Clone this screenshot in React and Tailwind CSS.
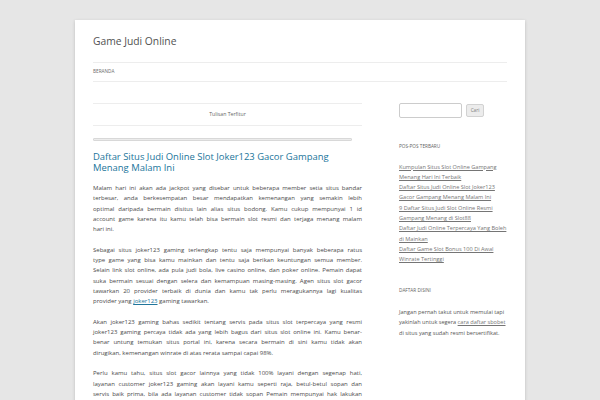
const paragraphs = [
  [
    'Malam hari ini akan ada jackpot yang disebar untuk beberapa member setia situs bandar',
    'terbesar, anda berkesempatan besar mendapatkan kemenangan yang semakin lebih',
    'optimal daripada bermain disitus lain alias situs bodong. Kamu cukup mempunyai 1 id',
    'account game karena itu kamu telah bisa bermain slot resmi dan terjaga menang malam',
    'hari ini.',
  ],
  [
    'Sebagai situs joker123 gaming terlengkap tentu saja mempunyai banyak beberapa ratus',
    'type game yang bisa kamu mainkan dan tentu saja berikan keuntungan semua member.',
    'Selain link slot online, ada pula judi bola, live casino online, dan poker online. Pemain dapat',
    'suka bermain sesuai dengan selera dan kemampuan masing-masing. Agen situs slot gacor',
    'tawarkan 20 provider terbaik di dunia dan kamu tak perlu meragukannya lagi kualitas',
    'LINK',
  ],
  [
    'Akan joker123 gaming bahas sedikit tentang servis pada situs slot terpercaya yang resmi',
    'joker123 gaming percaya tidak ada yang lebih bagus dari situs slot online ini. Kamu benar-',
    'benar untung temukan situs portal ini, karena secara bermain di sini kamu tidak akan',
    'dirugikan, kemenangan winrate di atas rerata sampai capai 98%.',
  ],
  [
    'Perlu kamu tahu, situs slot gacor lainnya yang tidak 100% layani dengan segenap hati,',
    'layanan customer joker123 gaming akan layani kamu seperti raja, betul-betul sopan dan',
    'servis baik prima, bila ada layanan customer tidak sopan Pemain mempunyai hak lakukan',
    'komplain langsung kepada pihak joker123 gaming.',
  ],
];

const recent = [
  'Kumpulan Situs Slot Online Gampang Menang Hari Ini Terbaik',
  'Daftar Situs Judi Online Slot Joker123 Gacor Gampang Menang Malam Ini',
  '9 Daftar Situs Judi Slot Online Resmi Gampang Menang di Slot88',
  'Daftar Judi Online Terpercaya Yang Boleh di Mainkan',
  'Daftar Game Slot Bonus 100 Di Awal Winrate Tertinggi',
];

function Paragraph({ lines }) {
  return (
    <div className="mb-[10.3px]">
      {lines.map((line, i) => {
        const last = i === lines.length - 1;
        if (line === 'LINK') {
          return (
            <div key={i} className="whitespace-nowrap">
              provider yang <a className="text-[#21759b] underline">joker123</a> gaming tawarkan.
            </div>
          );
        }
        return (
          <div
            key={i}
            className={last ? 'whitespace-nowrap' : 'whitespace-nowrap text-justify [text-align-last:justify]'}
          >
            {line}
          </div>
        );
      })}
    </div>
  );
}

export default function App() {
  return (
    <div className="min-h-screen bg-[#e6e6e6] pt-[20px] font-['Open_Sans',sans-serif] text-[#444]">
      <div className="mx-auto w-[450px] bg-white px-[18px] pt-[12px] pb-[20px] shadow-[0_1px_3px_rgba(100,100,100,0.3)]">
        {/* header */}
        <h1 className="text-[10.3px] leading-[19px] text-[#515151]">Game Judi Online</h1>
        <nav className="mt-[11px] flex h-[20px] items-center border-y border-[#ededed]">
          <span className="text-[4.7px] uppercase text-[#6a6a6a]">Beranda</span>
        </nav>

        <div className="mt-[21px] flex">
          {/* main column */}
          <main className="w-[269px]">
            <div className="flex h-[23px] items-center justify-center border-y border-[#ededed] text-[5.2px] text-[#666]">
              Tulisan Terfitur
            </div>
            <div className="mt-[12px] h-[3px] w-[259px] rounded-[1px] border border-[#d8d8d8] bg-[#ececec]" />

            <h2 className="mt-[10px] text-[9.45px] leading-[11px] text-[#21759b]">
              Daftar Situs Judi Online Slot Joker123 Gacor Gampang Menang Malam Ini
            </h2>

            <div className="mt-[10px] text-[6px] leading-[10.3px] text-[#4a4a4a]">
              {paragraphs.map((p, i) => (
                <Paragraph key={i} lines={p} />
              ))}
            </div>
          </main>

          {/* sidebar */}
          <aside className="ml-[37px] w-[108px]">
            <div className="flex items-center">
              <div className="h-[15px] w-[63px] rounded-[2px] border border-[#ccc] bg-white" />
              <div className="ml-[4px] flex h-[13px] w-[18px] items-center justify-center rounded-[2px] border border-[#d2d2d2] bg-[#ececec] text-[4.7px] text-[#7c7c7c]">
                Cari
              </div>
            </div>

            <h3 className="mt-[23px] text-[4.7px] uppercase leading-[10.3px] text-[#636363]">Pos-pos Terbaru</h3>
            <ul className="mt-[10.3px] text-[5.6px] leading-[10.3px]">
              {recent.map(t => (
                <li key={t}>
                  <a className="text-[#757575] underline">{t}</a>
                </li>
              ))}
            </ul>

            <h3 className="mt-[20px] text-[4.7px] uppercase leading-[10.3px] text-[#636363]">Daftar Disini</h3>
            <p className="mt-[12px] text-[5.6px] leading-[10.4px] text-[#555]">
              Jangan pernah takut untuk memulai tapi yakinlah untuk segera{' '}
              <a className="text-[#757575] underline">cara daftar sbobet</a> di situs yang sudah resmi bersertifikat.
            </p>
          </aside>
        </div>
      </div>
    </div>
  );
}
